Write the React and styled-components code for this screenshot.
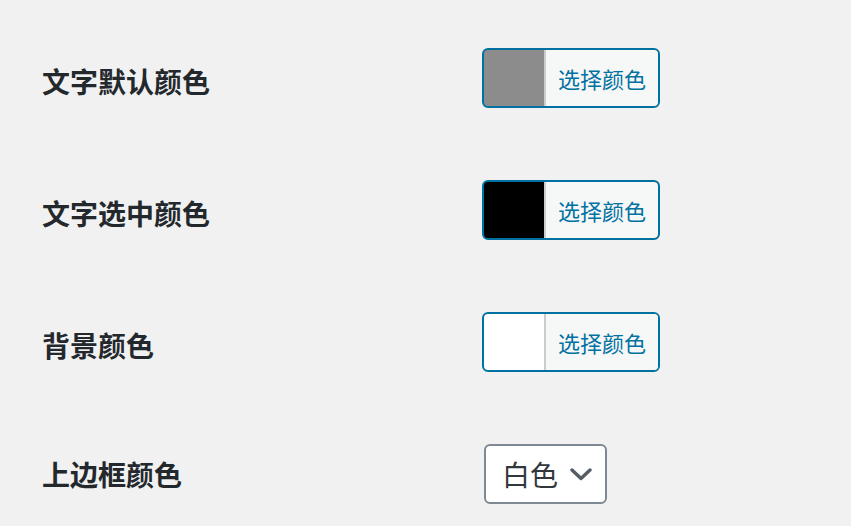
import React from "react";
import styled, { createGlobalStyle } from "styled-components";

const Global = createGlobalStyle`
  html, body { margin: 0; padding: 0; background: #f1f1f1; }
  body { font-family: "Noto Sans CJK SC", "Noto Sans", sans-serif; color: #23282d; }
`;

const Table = styled.div`
  display: flex;
  flex-direction: column;
  padding: 18px 0 0 42px;
`;

const Row = styled.div`
  display: grid;
  grid-template-columns: 440px auto;
  align-items: start;
`;

const Label = styled.div`
  font-size: 28px;
  font-weight: 700;
  line-height: 36px;
  padding-top: ${(p) => p.$top}px;
  color: #23282d;
  white-space: nowrap;
`;

const Field = styled.div`
  padding: 30px 0;
  display: flex;
`;

const ColorButton = styled.button`
  display: flex;
  align-items: stretch;
  height: 60px;
  margin: 0 0 12px 0;
  padding: 0 0 0 60px;
  border: 2px solid #0071a1;
  border-radius: 6px;
  background: ${(p) => p.$color};
  overflow: hidden;
  cursor: pointer;
  font-family: inherit;
`;

const ButtonText = styled.span`
  display: flex;
  align-items: center;
  padding: 0 12px;
  border-left: 2px solid #cccccc;
  background: #f6f7f7;
  color: #0071a1;
  font-size: 22px;
  line-height: 1;
  white-space: nowrap;
`;

const SelectBox = styled.div`
  display: flex;
  align-items: center;
  box-sizing: border-box;
  height: 60px;
  width: 123px;
  margin-left: 2px;
  padding: 0 0 0 16px;
  border: 2px solid #7e8993;
  border-radius: 6px;
  background: #ffffff;
  color: #32373c;
  font-size: 28px;
  line-height: 1;
  white-space: nowrap;
`;

const SelectText = styled.span`
  flex: none;
`;

const ChevronWrap = styled.span`
  display: flex;
  margin-left: 12px;
`;

const Chevron = () => (
  <svg width="22" height="13" viewBox="0 0 22 13" fill="none">
    <path d="M2 2 L11 10.5 L20 2" stroke="#555d66" strokeWidth="3.4" strokeLinecap="round" strokeLinejoin="round" />
  </svg>
);

const colors = [
  { label: "文字默认颜色", color: "#8c8c8c" },
  { label: "文字选中颜色", color: "#000000" },
  { label: "背景颜色", color: "#ffffff" },
];

export default function App() {
  return (
    <>
      <Global />
      <Table>
        {colors.map((c) => (
          <Row key={c.label}>
            <Label $top={45}>{c.label}</Label>
            <Field>
              <ColorButton $color={c.color}>
                <ButtonText>选择颜色</ButtonText>
              </ColorButton>
            </Field>
          </Row>
        ))}
        <Row>
          <Label $top={42}>上边框颜色</Label>
          <Field>
            <SelectBox>
              <SelectText>白色</SelectText>
              <ChevronWrap>
                <Chevron />
              </ChevronWrap>
            </SelectBox>
          </Field>
        </Row>
      </Table>
    </>
  );
}
